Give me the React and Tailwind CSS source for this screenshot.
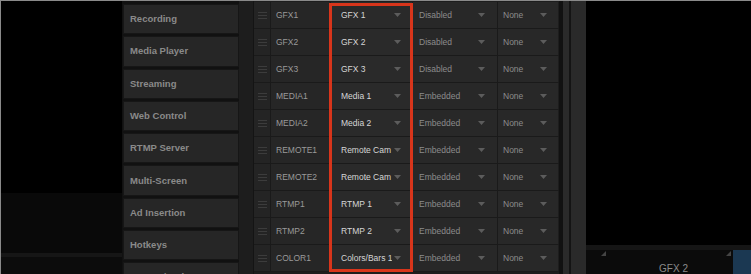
import React from 'react';

const menu = [
  'Recording',
  'Media Player',
  'Streaming',
  'Web Control',
  'RTMP Server',
  'Multi-Screen',
  'Ad Insertion',
  'Hotkeys',
  'Macros/Tasks',
];

const rows = [
  { name: 'GFX1', source: 'GFX 1', audio: 'Disabled' },
  { name: 'GFX2', source: 'GFX 2', audio: 'Disabled' },
  { name: 'GFX3', source: 'GFX 3', audio: 'Disabled' },
  { name: 'MEDIA1', source: 'Media 1', audio: 'Embedded' },
  { name: 'MEDIA2', source: 'Media 2', audio: 'Embedded' },
  { name: 'REMOTE1', source: 'Remote Cam', audio: 'Embedded' },
  { name: 'REMOTE2', source: 'Remote Cam', audio: 'Embedded' },
  { name: 'RTMP1', source: 'RTMP 1', audio: 'Embedded' },
  { name: 'RTMP2', source: 'RTMP 2', audio: 'Embedded' },
  { name: 'COLOR1', source: 'Colors/Bars 1', audio: 'Embedded' },
];

function Arrow() {
  return (
    <svg width="7" height="4" viewBox="0 0 7 4" className="shrink-0">
      <path d="M0 0 L7 0 L3.5 4 Z" fill="#5c5c5c" />
    </svg>
  );
}

function Handle() {
  return (
    <svg width="9" height="7" viewBox="0 0 9 7">
      <rect x="0" y="0" width="9" height="1" fill="#3c3c3c" />
      <rect x="0" y="3" width="9" height="1" fill="#3c3c3c" />
      <rect x="0" y="6" width="9" height="1" fill="#3c3c3c" />
    </svg>
  );
}

function Row({ row }) {
  return (
    <div className="flex h-[27px] border-b border-[#1a1a1a] text-[8.5px]">
      <div className="w-[17px] flex items-center justify-center bg-[#242424] border-r border-[#1a1a1a]">
        <Handle />
      </div>
      <div className="w-[60px] flex items-center pl-[5px] bg-[#262626] border-r border-[#1a1a1a] text-[#9a9a9a]">
        {row.name}
      </div>
      <div className="w-[82px] flex items-center pl-[10px] pr-[11px] bg-[#2a2a2a] border-r border-[#1a1a1a] text-[#d6d6d6]">
        <span className="flex-1 whitespace-nowrap overflow-hidden mr-[2px]">{row.source}</span>
        <Arrow />
      </div>
      <div className="w-[85px] flex items-center pl-[6px] pr-[12px] bg-[#282828] border-r border-[#1a1a1a] text-[#8c8c8c]">
        <span className="flex-1">{row.audio}</span>
        <Arrow />
      </div>
      <div className="w-[60px] flex items-center pl-[5px] pr-[11px] bg-[#282828] text-[#8c8c8c]">
        <span className="flex-1">None</span>
        <Arrow />
      </div>
    </div>
  );
}

export default function App() {
  return (
    <div
      className="h-[274px] w-[751px] overflow-hidden bg-black border-t border-l border-[#8a8a8a] flex"
      style={{ fontFamily: '"Liberation Sans", Arial, sans-serif' }}
    >
      {/* left preview area */}
      <div className="w-[121px] flex flex-col">
        <div className="h-[192px] bg-black" />
        <div className="h-[60px] bg-[#090909]" />
        <div className="h-[4px] bg-[#161616]" />
        <div className="flex-1 bg-[#0c0c0c]" />
      </div>

      {/* settings menu */}
      <div className="w-[117px] flex flex-col gap-[2px] pt-[3px] pl-[1px] bg-[#111]">
        {menu.map((m) => (
          <div
            key={m}
            className="h-[30.3px] shrink-0 flex items-center pl-[6px] bg-[#262626] border border-[#161616] text-[9.5px] font-bold text-[#8a8a8a]"
          >
            {m}
          </div>
        ))}
      </div>

      {/* gutter */}
      <div className="w-[15px] bg-[#1d1d1d] border-r border-[#141414]" />

      {/* table */}
      <div className="relative w-[305px] pt-[1px] bg-[#1d1d1d]">
        {rows.map((r) => (
          <Row key={r.name} row={r} />
        ))}
        <div className="absolute left-[75px] top-[2px] w-[84px] h-[269px] border-[3px] border-[#d8351b]" />
      </div>

      {/* scrollbar */}
      <div className="w-[27px] flex">
        <div className="w-[4px] bg-[#111]" />
        <div className="w-[6px] bg-[#2a2a2a]" />
        <div className="w-[2px] bg-[#141414]" />
        <div className="flex-1 bg-[#2a2a2a]" />
      </div>

      {/* right preview area */}
      <div className="flex-1 flex flex-col bg-black">
        <div className="h-[252px]" />
        <div className="h-[5px] bg-[#151515]" />
        <div className="flex-1 flex bg-[#0b0b0b]">
          <div className="w-[20px] flex items-start justify-end pt-[1px]">
            <svg width="5" height="5" viewBox="0 0 5 5"><path d="M5 0 L5 5 L0 5 Z" fill="#444" /></svg>
          </div>
          <div className="flex-1 flex justify-center pt-[14px] pl-[16px] text-[10px] text-[#8a8a8a] leading-none">GFX 2</div>
          <div className="w-[6px] flex items-start justify-end pt-[1px]">
            <svg width="5" height="5" viewBox="0 0 5 5"><path d="M5 0 L5 5 L0 5 Z" fill="#444" /></svg>
          </div>
          <div className="w-[18px] ml-[2px] bg-[#1b3852]" />
        </div>
      </div>
    </div>
  );
}
